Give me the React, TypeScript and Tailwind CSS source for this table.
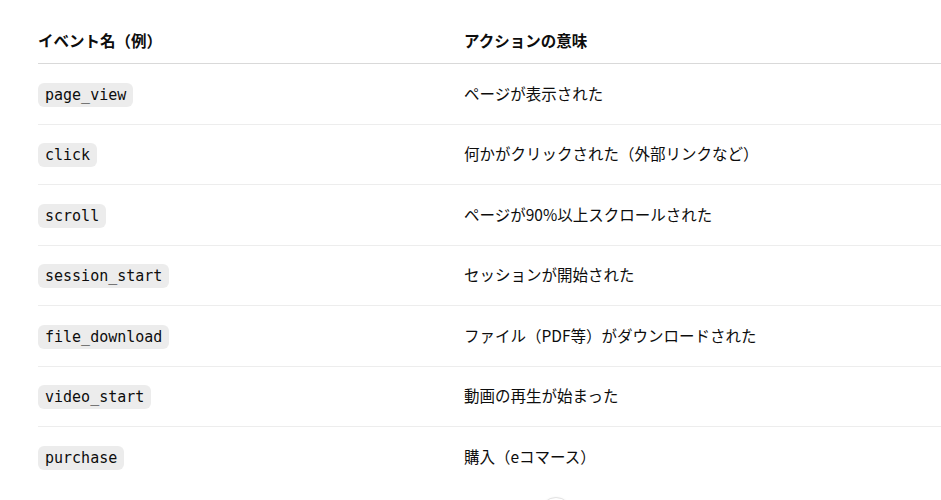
const rows: [string, string][] = [
  ["page_view", "ページが表示された"],
  ["click", "何かがクリックされた（外部リンクなど）"],
  ["scroll", "ページが90%以上スクロールされた"],
  ["session_start", "セッションが開始された"],
  ["file_download", "ファイル（PDF等）がダウンロードされた"],
  ["video_start", "動画の再生が始まった"],
  ["purchase", "購入（eコマース）"],
];

export default function App() {
  return (
    <div
      className="relative h-[500px] w-full overflow-hidden bg-white pl-[38px] text-[#0d0d0d]"
      style={{ fontFamily: '"Noto Sans CJK JP", "Noto Sans", sans-serif' }}
    >
      {/* Header */}
      <div className="grid h-[64px] grid-cols-[426px_1fr] items-center border-b border-[#d9d9d9] pt-[18px] text-[15.5px] font-bold">
        <div>イベント名（例）</div>
        <div>アクションの意味</div>
      </div>

      {/* Rows */}
      {rows.map(([event, meaning], i) => (
        <div
          key={event}
          className={`grid h-[60.5px] grid-cols-[426px_1fr] items-center text-[15.5px] ${
            i < rows.length - 1 ? "border-b border-[#ededed]" : ""
          }`}
        >
          <div className="-mt-[1px]">
            <code className="rounded-[6px] bg-[#ececec] px-[7px] py-[3px] font-['DejaVu_Sans_Mono',monospace] text-[15px] leading-[20px]">
              {event}
            </code>
          </div>
          <div className="-mt-[1px]">{meaning}</div>
        </div>
      ))}

      {/* scroll button peeking at the bottom */}
      <div className="absolute left-[540px] top-[497px] h-8 w-8 rounded-full border border-[#e3e3e3] bg-white shadow-sm" />
    </div>
  );
}
